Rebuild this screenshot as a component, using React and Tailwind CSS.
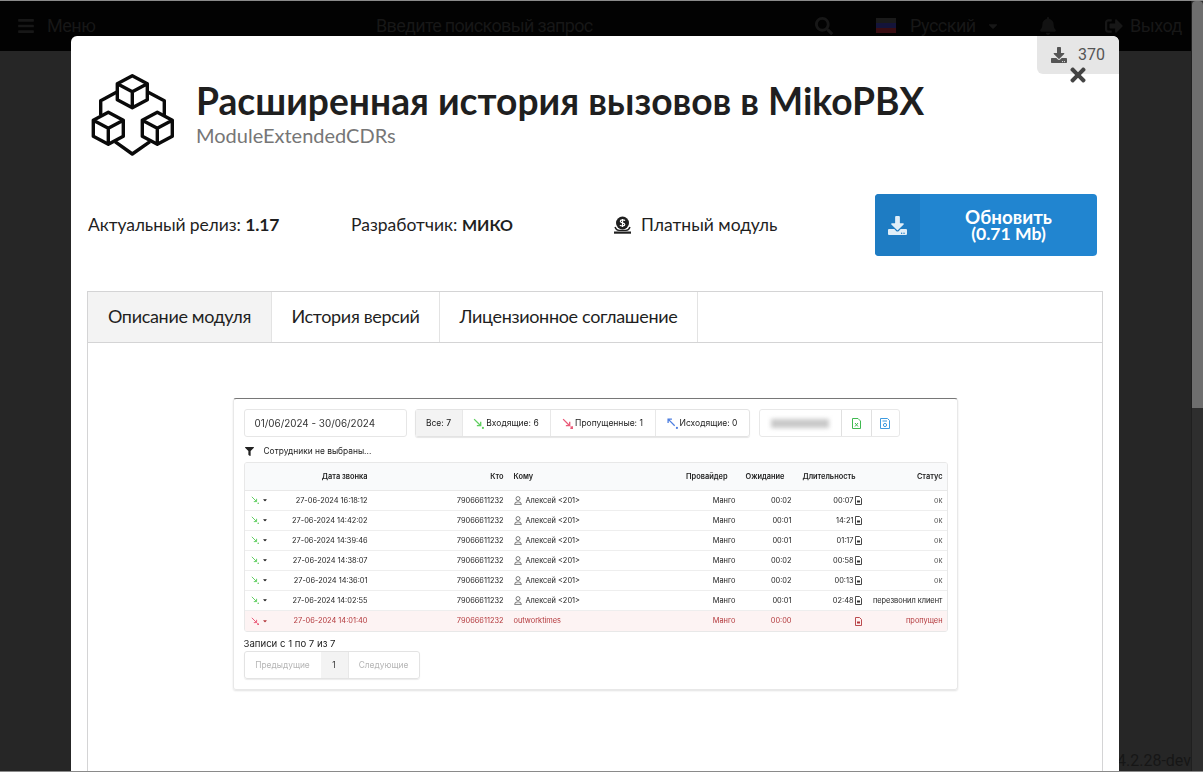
import React from "react";
import { FaBars, FaSearch, FaCaretDown, FaBell, FaSignOutAlt, FaDownload, FaTimes, FaFilter } from "react-icons/fa";

const ROWS = [
  { date: "27-06-2024 16:18:12", wait: "00:02", dur: "00:07", status: "ок" },
  { date: "27-06-2024 14:42:02", wait: "00:01", dur: "14:21", status: "ок" },
  { date: "27-06-2024 14:39:46", wait: "00:01", dur: "01:17", status: "ок" },
  { date: "27-06-2024 14:38:07", wait: "00:02", dur: "00:58", status: "ок" },
  { date: "27-06-2024 14:36:01", wait: "00:02", dur: "00:13", status: "ок" },
  { date: "27-06-2024 14:02:55", wait: "00:01", dur: "02:48", status: "перезвонил клиент" },
  { date: "27-06-2024 14:01:40", wait: "00:00", dur: "", status: "пропущен", missed: true },
];

const GRID = "grid grid-cols-[123px_137px_170px_61px_56px_71px_85px] items-center whitespace-nowrap";

// logo: three cubes joined by lines
const Cube = ({ x, y }) => (
  <g transform={`translate(${x} ${y})`}>
    <path d="M0 -16 L15 -8 V8 L0 16 L-15 8 V-8 Z M-15 -8 L0 0 L15 -8 M0 0 V16" />
  </g>
);

const ModuleLogo = () => (
  <svg width="90" height="90" viewBox="7 7 90 90" fill="none" stroke="#0a0a0a" strokeWidth="3.4" strokeLinejoin="round" className="-mt-[6px] shrink-0">
    <Cube x={52.3} y={31.7} />
    <Cube x={28.3} y={68.3} />
    <Cube x={77.3} y={68.3} />
    <path d="M37.3 31.7 L20.7 40.7 V55 M67.3 31.7 L84.3 40.7 V55 M35 81.7 L52.3 94 L70 81.7" />
  </svg>
);

const CoinIcon = () => (
  <svg width="19" height="19" viewBox="0 0 19 19" className="shrink-0 -ml-px">
    <circle cx="9.5" cy="7" r="6.5" fill="#1f1f1f" />
    <path d="M12 4.6 C11 3.6 7.4 3.6 7.3 5.4 C7.2 7.2 11.8 6.6 11.8 8.5 C11.8 10.3 8 10.3 6.9 9.2 M9.5 3 V11" stroke="#fff" strokeWidth="1.2" fill="none" />
    <rect x="1" y="15.5" width="17" height="2.2" fill="#1f1f1f" />
    <path d="M2 11 Q3 14 6 14.4 H13 Q16 14 17 11" fill="none" stroke="#1f1f1f" strokeWidth="1.4" />
  </svg>
);

const CallArrow = ({ color, mark = "dot", up = false, size = 8 }) => (
  <svg width={size} height={size} viewBox="0 0 10 10" fill="none" stroke={color} strokeWidth="1.2" className="shrink-0">
    {up ? <path d="M7 7 L1 1 M1 4.5 V1 H4.5" /> : <path d="M1 1 L7 7 M3.5 7 H7 V3.5" />}
    {mark === "dot" ? <circle cx="9" cy="9" r="1" fill={color} stroke="none" /> : <path d="M7.8 7.8 L10 10 M10 7.8 L7.8 10" />}
  </svg>
);

const FileIcon = ({ color }) => (
  <svg width="7" height="9" viewBox="0 0 7 9" fill="none" stroke={color} strokeWidth="0.9" className="shrink-0">
    <path d="M0.5 0.5 H4.5 L6.5 2.5 V8.5 H0.5 Z" />
    <rect x="2" y="4.5" width="3" height="2" fill={color} stroke="none" />
  </svg>
);

const UserIcon = () => (
  <svg width="8" height="9" viewBox="0 0 8 9" fill="none" stroke="#444" strokeWidth="0.7" className="shrink-0">
    <circle cx="4" cy="2.6" r="2" />
    <path d="M0.6 8.4 Q0.6 5.8 4 5.8 Q7.4 5.8 7.4 8.4 Z" />
  </svg>
);

const CdrScreenshot = () => (
  <div className="mx-auto mt-[55px] w-[725px] h-[292px] rounded-[3px] border border-[#e8e8e8] border-t-[#777] shadow-[0_1px_2px_rgba(0,0,0,0.12)] p-[10px] font-['Inter',sans-serif] text-[#222] blur-[0.25px]">
    <div className="flex h-[28px] text-[8.5px]">
      <div className="w-[163px] rounded-[3px] border border-[#e6e6e6] flex items-center pl-[10px] text-[9.9px] text-[#333]">
        01/06/2024 - 30/06/2024
      </div>
      <div className="ml-[8px] w-[335px] rounded-[3px] border border-[#e3e3e3] shadow-[0_1px_1px_rgba(0,0,0,0.1)] flex">
        <div className="w-[46px] bg-[#f3f3f3] flex items-center justify-center">Все:&nbsp;<b className="font-medium">7</b></div>
        <div className="w-[88px] border-l border-[#e8e8e8] flex items-center justify-center gap-[2px]">
          <CallArrow color="#5fce5f" size={11} />Входящие: 6
        </div>
        <div className="w-[105px] border-l border-[#e8e8e8] flex items-center justify-center gap-[2px]">
          <CallArrow color="#ea5a78" mark="x" size={11} />Пропущенные: 1
        </div>
        <div className="flex-1 border-l border-[#e8e8e8] flex items-center justify-center gap-[2px]">
          <CallArrow color="#4f7fe0" up size={11} />Исходящие: 0
        </div>
      </div>
      <div className="ml-[9px] w-[141px] rounded-[3px] border border-[#e8e8e8] flex">
        <div className="w-[81px] flex items-center justify-center">
          <div className="w-[58px] h-[9px] bg-[#c9c9c9] blur-[2px]" />
        </div>
        <div className="w-[30px] border-l border-[#e0e0e0] flex items-center justify-center">
          <svg width="9" height="11" viewBox="0 0 9 11" fill="none" stroke="#3fb950" strokeWidth="1"><path d="M0.5 0.5 H6 L8.5 3 V10.5 H0.5 Z" /><path d="M3 5 L6 8.5 M6 5 L3 8.5" /></svg>
        </div>
        <div className="flex-1 border-l border-[#e0e0e0] flex items-center justify-center">
          <svg width="10" height="11" viewBox="0 0 10 11" fill="none" stroke="#3d9be0" strokeWidth="1"><path d="M0.5 0.5 H7.5 L9.5 2.5 V10.5 H0.5 Z" /><circle cx="5" cy="7" r="1.6" /><path d="M2.5 3 H7" /></svg>
        </div>
      </div>
    </div>

    <div className="flex items-center h-[25px] pt-[3px] text-[8.4px]">
      <FaFilter className="w-[9px] h-[9px] text-[#222] ml-px" />
      <span className="ml-[10px]">Сотрудники не выбраны...</span>
    </div>

    <div className="w-[704px] rounded-[3px] border border-[#e8e8e8] text-[7.4px] overflow-hidden">
      <div className={`${GRID} h-[28px] bg-[#f9fafb] font-semibold border-b border-[#e8e8e8]`}>
        <div className="text-right">Дата звонка</div>
        <div className="text-right pr-px">Кто</div>
        <div className="pl-[9px]">Кому</div>
        <div className="text-right pr-[8px]">Провайдер</div>
        <div className="text-right pr-[7px]">Ожидание</div>
        <div className="text-right pr-[7px]">Длительность</div>
        <div className="text-right pr-[5px]">Статус</div>
      </div>
      {ROWS.map((row) => (
        <div
          key={row.date}
          className={`${GRID} h-[20px] border-b last:border-b-0 border-[#eeeeee] ${row.missed ? "bg-[#fdf3f3] text-[#b3383c]" : ""}`}
        >
          <div className="flex items-center justify-between pl-[6px]">
            <span className="flex items-center gap-[3px]">
              <CallArrow color={row.missed ? "#ea5a78" : "#5fce5f"} mark={row.missed ? "x" : "dot"} />
              <FaCaretDown className="w-[6px] h-[6px]" />
            </span>
            <span>{row.date}</span>
          </div>
          <div className="text-right pr-px">79066611232</div>
          {row.missed ? (
            <div className="pl-[9px]">outworktimes</div>
          ) : (
            <div className="pl-[9px] flex items-center gap-[4px]"><UserIcon />Алексей &lt;201&gt;</div>
          )}
          <div className="text-right">Манго</div>
          <div className="text-right">{row.wait}</div>
          <div className="flex items-center justify-end gap-[1px] pr-[1px]">
            {row.dur}
            <FileIcon color={row.missed ? "#b3383c" : "#333"} />
          </div>
          <div className={`text-right pr-[5px] ${row.status === "ок" ? "text-[#555]" : ""}`}>{row.status}</div>
        </div>
      ))}
    </div>

    <div className="h-[19px] flex items-end text-[9.6px]">Записи с 1 по 7 из 7</div>
    <div className="w-[176px] h-[28px] rounded-[3px] border border-[#e3e3e3] shadow-[0_1px_1px_rgba(0,0,0,0.08)] flex text-[8.4px] text-[#b5b5b5]">
      <div className="w-[76px] flex items-center justify-center">Предыдущие</div>
      <div className="w-[27px] bg-[#f3f3f3] text-[#333] flex items-center justify-center">1</div>
      <div className="flex-1 border-l border-[#e8e8e8] flex items-center justify-center">Следующие</div>
    </div>
  </div>
);

export default function App() {
  return (
    <div className="relative h-screen w-full overflow-hidden flex bg-[#262626] border-y border-[#8a8a8a] font-['Lato',sans-serif]">
      <div className="flex-1 flex flex-col">
        <header className="h-[50px] bg-[#020202] flex items-center pb-[1px] text-[#171717] text-[18px] tracking-[-0.5px] font-['Roboto',sans-serif] whitespace-nowrap">
          <FaBars className="ml-[18px] w-[16px] h-[18px]" />
          <span className="ml-[13px] w-[50px]">Меню</span>
          <span className="ml-[279px] w-[217px] tracking-[-0.68px]">Введите поисковый запрос</span>
          <FaSearch className="ml-[222px] w-[18px] h-[18px]" />
          <div className="ml-[43px] w-[20px] h-[16px] flex flex-col">
            <div className="flex-1 bg-[#1a1a1a]" />
            <div className="flex-1 bg-[#14143a]" />
            <div className="flex-1 bg-[#3a0d12]" />
          </div>
          <span className="ml-[14px] w-[65px]">Русский</span>
          <FaCaretDown className="ml-[11px] w-[14px] h-[14px]" />
          <FaBell className="ml-[40px] w-[16px] h-[18px] text-[#121212]" />
          <FaSignOutAlt className="ml-[48px] w-[20px] h-[18px]" />
          <span className="ml-[6px]">Выход</span>
        </header>
        <main className="flex-1 flex items-end justify-end -mb-[2px] overflow-hidden">
          <span className="text-[16px] text-[#161616] font-['Roboto',sans-serif] whitespace-nowrap">24.2.28-dev</span>
        </main>
      </div>

      {/* page scrollbar */}
      <div className="w-[12px] shrink-0 bg-[#2e2e2e] border-l border-[#1f1f1f]">
        <div className="h-[407px] bg-[#6e6e6e] rounded-t-[4px]" />
      </div>

      {/* modal */}
      <div className="absolute left-[71px] top-[35px] w-[1048px] h-[760px] bg-white rounded-t-[6px] overflow-hidden text-[#1f1f1f]">
        <div className="absolute right-0 top-0 w-[82px] h-[38px] bg-[#e6e6e6] rounded-tr-[6px] rounded-bl-[6px] flex items-center pl-[14px] text-[#555] text-[16px]">
          <FaDownload className="w-[16px] h-[16px]" />
          <span className="ml-[11px] font-['Roboto',sans-serif]">370</span>
        </div>
        <FaTimes className="absolute left-[996px] top-[28px] w-[22px] h-[22px] text-[#444]" />

        <div className="flex items-center pl-[16px] pt-[29px] h-[128px]">
          <ModuleLogo />
          <div className="ml-[19px]">
            <h1 className="text-[37.2px] leading-[40px] font-bold text-[#1f1f1f] whitespace-nowrap">Расширенная история вызовов в MikoPBX</h1>
            <div className="text-[20px] leading-[28px] text-[#767676]">ModuleExtendedCDRs</div>
          </div>
        </div>

        <div className="mt-[30px] ml-[17px] grid grid-cols-[263px_263px_261px_222px] items-center h-[62px] text-[17.5px]">
          <div className="tracking-[-0.1px]">Актуальный релиз: <b>1.17</b></div>
          <div>Разработчик: <b className="text-[16px]">МИКО</b></div>
          <div className="flex items-center gap-[9px]"><CoinIcon />Платный модуль</div>
          <div className="h-[62px] rounded-[4px] overflow-hidden bg-[#2185d0] text-white flex">
            <div className="w-[45px] bg-[#1e7cc3] flex items-center justify-center">
              <FaDownload className="w-[19px] h-[19px] text-[#e0eef8]" />
            </div>
            <div className="flex-1 flex flex-col items-center justify-center text-[18.8px] leading-[17px] font-bold">
              <span>Обновить</span>
              <span className="text-[17.6px]">(0.71 Mb)</span>
            </div>
          </div>
        </div>

        <div className="mt-[35px] ml-[16px] w-[1016px] h-[600px] border border-[#d4d4d5]">
          <div className="flex h-[51px] border-b border-[#d4d4d5] text-[18px] tracking-[-0.33px]">
            <div className="w-[184px] bg-[#f3f3f3] border-r border-[#e3e3e3] flex items-center justify-center pb-[2px]">Описание модуля</div>
            <div className="w-[168px] border-r border-[#e3e3e3] flex items-center justify-center pb-[2px]">История версий</div>
            <div className="w-[258px] border-r border-[#e3e3e3] flex items-center justify-center pb-[2px]">Лицензионное соглашение</div>
          </div>
          <CdrScreenshot />
        </div>
      </div>
    </div>
  );
}
